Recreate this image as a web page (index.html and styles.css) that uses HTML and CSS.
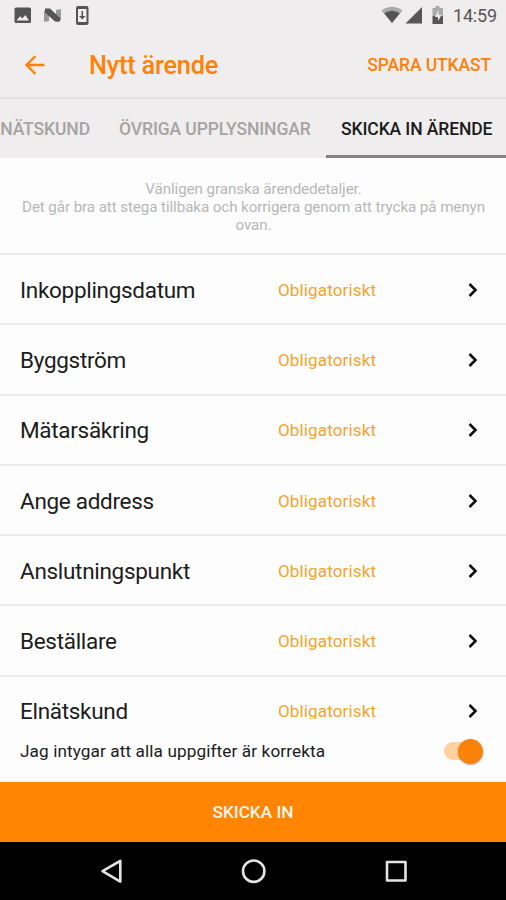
FILE: index.html
```html
<!DOCTYPE html>
<html lang="sv">
<head>
<meta charset="utf-8">
<title>Nytt ärende</title>
<link rel="stylesheet" href="styles.css">
</head>
<body>
<div class="screen">
  <header class="top">
    <div class="status">
      <svg class="status-left" width="100" height="32" viewBox="0 0 100 32">
        <path fill="#555" fill-rule="evenodd" d="M16 7.500h13.500a1.500 1.500 0 0 1 1.500 1.500v12.500a1.500 1.500 0 0 1-1.500 1.500H16a1.500 1.500 0 0 1-1.500-1.500V9a1.500 1.500 0 0 1 1.500-1.500zM16.500 20.500h12.500l-3.700-5.500-3 3.500-2.200-2.200z"/>
        <path fill="#999" d="M44 11l5-2v12l-5 1zM56 10l5-1v11l-5 2z"/>
        <path fill="#555" d="M45 8.500h5l10 9.500v3.500h-5L45 12.500z"/>
        <path fill="#555" fill-rule="evenodd" d="M78 6h8.500a2 2 0 0 1 2 2v15a2 2 0 0 1-2 2H78a2 2 0 0 1-2-2V8a2 2 0 0 1 2-2zM78 9v13h8.500V9z"/>
        <path fill="#555" d="M81.500 11h1.500v5h2.500l-3.250 3.500L79 16h2.500z"/>
      </svg>
      <svg class="status-right" width="66" height="32" viewBox="0 0 66 32">
        <path fill="#aaa" d="M1.500 10.500q10.500-7.500 21 0L12 23z"/>
        <path fill="#555" d="M4.200 13.300q7.800-5 15.600 0L12 23z"/>
        <path fill="#555" d="M42 7v16.500H25.500z"/>
        <path fill="#aaa" d="M55.500 6h4v2H63v8H52.500V8h3z"/>
        <path fill="#555" d="M52.500 16H63v8H52.500z"/>
        <path fill="#efeded" d="M58.500 10l-3.500 7h3v4l3.500-6h-3z"/>
      </svg>
      <time class="clock">14:59</time>
    </div>
    <div class="appbar">
      <svg class="back" width="24" height="24" viewBox="0 0 24 24"><path d="M21.500 12H4M12.500 3L3.500 12l9 9"/></svg>
      <h1 class="title">Nytt ärende</h1>
      <span class="save">SPARA UTKAST</span>
    </div>
  </header>
  <nav class="tabs">
    <span class="tab tab-first">ELNÄTSKUND</span>
    <span class="tab tab-middle">ÖVRIGA UPPLYSNINGAR</span>
    <span class="tab tab-active">SKICKA IN ÄRENDE</span>
  </nav>
  <main class="list">
    <p class="hint">Vänligen granska ärendedetaljer.<br>Det går bra att stega tillbaka och korrigera genom att trycka på menyn<br>ovan.</p>
    <div class="row"><span class="name">Inkopplingsdatum</span><span class="need">Obligatoriskt</span><svg class="chev" width="12" height="16" viewBox="0 0 12 16"><path d="M2.500 2l6 6-6 6"/></svg></div>
    <div class="row"><span class="name">Byggström</span><span class="need">Obligatoriskt</span><svg class="chev" width="12" height="16" viewBox="0 0 12 16"><path d="M2.500 2l6 6-6 6"/></svg></div>
    <div class="row"><span class="name">Mätarsäkring</span><span class="need">Obligatoriskt</span><svg class="chev" width="12" height="16" viewBox="0 0 12 16"><path d="M2.500 2l6 6-6 6"/></svg></div>
    <div class="row"><span class="name">Ange address</span><span class="need">Obligatoriskt</span><svg class="chev" width="12" height="16" viewBox="0 0 12 16"><path d="M2.500 2l6 6-6 6"/></svg></div>
    <div class="row"><span class="name">Anslutningspunkt</span><span class="need">Obligatoriskt</span><svg class="chev" width="12" height="16" viewBox="0 0 12 16"><path d="M2.500 2l6 6-6 6"/></svg></div>
    <div class="row"><span class="name">Beställare</span><span class="need">Obligatoriskt</span><svg class="chev" width="12" height="16" viewBox="0 0 12 16"><path d="M2.500 2l6 6-6 6"/></svg></div>
    <div class="row"><span class="name">Elnätskund</span><span class="need">Obligatoriskt</span><svg class="chev" width="12" height="16" viewBox="0 0 12 16"><path d="M2.500 2l6 6-6 6"/></svg></div>
  </main>
  <div class="confirm">
    <span class="confirm-text">Jag intygar att alla uppgifter är korrekta</span>
    <span class="switch"><span class="track"></span><span class="knob"></span></span>
  </div>
  <div class="submit">SKICKA IN</div>
  <footer class="navbar">
    <svg width="506" height="58" viewBox="0 0 506 58">
      <path d="M120.300 18.800v20.800L102.500 29.200z"/>
      <circle cx="253.700" cy="29.200" r="10.700"/>
      <rect x="387" y="20" width="18.500" height="18.500"/>
    </svg>
  </footer>
</div>
</body>
</html>
```

FILE: styles.css
```css
* { box-sizing: border-box; }
body { margin: 0; font-family: Roboto, "Liberation Sans", sans-serif; }
.screen {
  width: 506px;
  height: 900px;
  display: flex;
  flex-direction: column;
  overflow: hidden;
  background: #fdfdfd;
  color: #1c1c1c;
  white-space: nowrap;
}
.top { height: 99px; background: #efeded; border-bottom: 2px solid #e2e0e0; flex: none; }
.status { height: 32px; display: flex; align-items: center; }
.status-right { margin-left: 280px; }
.clock { margin-left: 7px; font-size: 18px; line-height: 32px; letter-spacing: -0.2px; color: #555; }
.appbar { height: 64px; display: flex; align-items: center; padding: 2px 15px 0 23px; }
.back { fill: none; stroke: #ff8108; stroke-width: 2.400; }
.title { margin: 0 0 0 42px; font-size: 25.300px; font-weight: 500; letter-spacing: -0.2px; color: #ff8108; }
.save { margin-left: auto; font-size: 17.500px; font-weight: 500; letter-spacing: -0.120px; color: #ff8108; }
.tabs { height: 59px; flex: none; display: flex; background: #efeded; overflow: hidden; }
.tab { flex: none; line-height: 61px; font-size: 17.500px; font-weight: 500; letter-spacing: -0.100px; color: #a5a3a3; }
.tab-first { width: 105px; padding-right: 15px; display: flex; justify-content: flex-end; }
.tab-middle { width: 221px; padding-left: 14px; }
.tab-active { width: 180px; padding-left: 15px; border-bottom: 3px solid #858081; color: #1c1c1c; }
.list { height: 561px; flex: none; overflow: hidden; }
.hint { height: 97px; margin: 0; padding: 21.500px 0 0 1px; border-bottom: 2px solid #ececec; text-align: center; font-size: 15.200px; letter-spacing: -0.100px; line-height: 18px; color: #b7b7b7; }
.row { height: 70.300px; display: flex; align-items: center; padding: 1px 27px 0 20px; border-bottom: 2px solid #ececec; }
.name { width: 258px; font-size: 22.500px; letter-spacing: -0.300px; }
.need { font-size: 17px; letter-spacing: 0.150px; color: #f5a32f; }
.chev { margin-left: auto; fill: none; stroke: #111; stroke-width: 2.600; }
.confirm { height: 63px; flex: none; display: flex; align-items: center; justify-content: space-between; padding: 1px 23px 0 20px; }
.confirm-text { font-size: 17.200px; letter-spacing: 0.100px; }
.switch { width: 39px; height: 25px; display: flex; align-items: center; }
.track { width: 30px; height: 18px; border-radius: 9px; background: #ffd1a0; }
.knob { flex: none; width: 25px; height: 25px; margin-left: -16px; border-radius: 50%; background: #fb8208; box-shadow: 0 1px 2px #0005; }
.submit { height: 60px; flex: none; line-height: 60px; background: #ff8503; color: #fff5ed; text-align: center; font-size: 17.200px; font-weight: 500; }
.navbar { height: 58px; flex: none; background: #000; }
.navbar svg { display: block; fill: none; stroke: #e4e4e4; stroke-width: 2.600; stroke-linejoin: round; }
```
